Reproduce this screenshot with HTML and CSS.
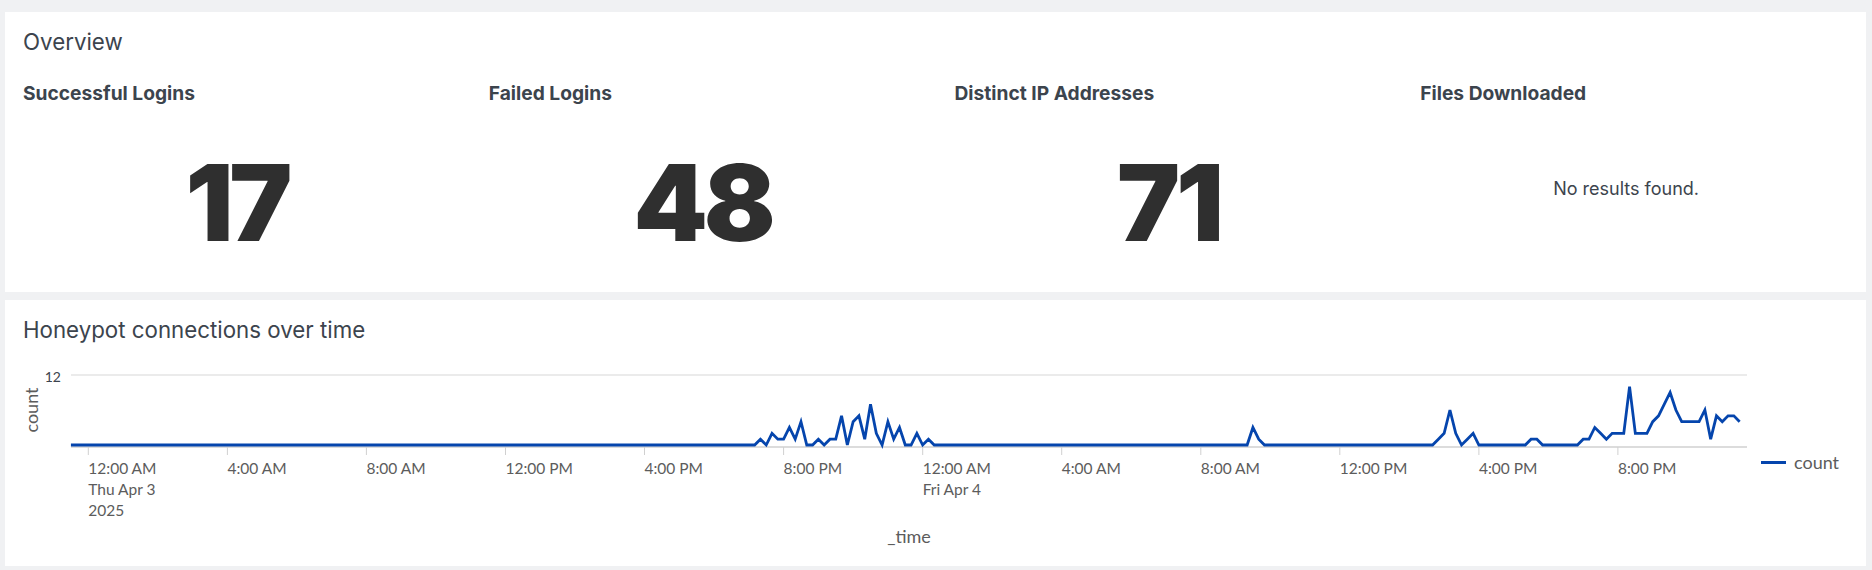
FILE: index.html
```html
<!DOCTYPE html>
<html lang="en">
<head>
<meta charset="utf-8">
<title>Honeypot Dashboard</title>
<link rel="stylesheet" href="styles.css">
</head>
<body>
<main class="dashboard">
  <section class="panel overview">
    <h2 class="panel-title">Overview</h2>
    <div class="stats">
      <div class="stat">
        <h3 class="stat-title">Successful Logins</h3>
        <div class="stat-value">17</div>
      </div>
      <div class="stat">
        <h3 class="stat-title">Failed Logins</h3>
        <div class="stat-value">48</div>
      </div>
      <div class="stat">
        <h3 class="stat-title">Distinct IP Addresses</h3>
        <div class="stat-value">71</div>
      </div>
      <div class="stat">
        <h3 class="stat-title">Files Downloaded</h3>
        <div class="stat-empty">No results found.</div>
      </div>
    </div>
  </section>

  <section class="panel timeline">
    <h2 class="panel-title">Honeypot connections over time</h2>
    <div class="chart-row">
      <svg class="chart" width="1730" height="200" viewBox="0 0 1730 200" xmlns="http://www.w3.org/2000/svg">
        <line class="grid" x1="48" y1="20" x2="1724" y2="20"/>
        <text class="y-tick" x="38" y="27">12</text>
        <text class="axis-title" transform="translate(15.3 55) rotate(-90)">count</text>
        <line class="axis" x1="48" y1="92" x2="1724" y2="92"/>
        <g class="ticks">
          <line x1="65.3" y1="92" x2="65.3" y2="100"/>
          <line x1="204.4" y1="92" x2="204.4" y2="100"/>
          <line x1="343.4" y1="92" x2="343.4" y2="100"/>
          <line x1="482.5" y1="92" x2="482.5" y2="100"/>
          <line x1="621.5" y1="92" x2="621.5" y2="100"/>
          <line x1="760.6" y1="92" x2="760.6" y2="100"/>
          <line x1="899.7" y1="92" x2="899.7" y2="100"/>
          <line x1="1038.7" y1="92" x2="1038.7" y2="100"/>
          <line x1="1177.8" y1="92" x2="1177.8" y2="100"/>
          <line x1="1316.8" y1="92" x2="1316.8" y2="100"/>
          <line x1="1455.9" y1="92" x2="1455.9" y2="100"/>
          <line x1="1594.9" y1="92" x2="1594.9" y2="100"/>
        </g>
        <g class="x-labels">
          <text x="65.3" y="119">12:00 AM</text>
          <text x="65.3" y="140">Thu Apr 3</text>
          <text x="65.3" y="161">2025</text>
          <text x="204.4" y="119">4:00 AM</text>
          <text x="343.4" y="119">8:00 AM</text>
          <text x="482.5" y="119">12:00 PM</text>
          <text x="621.5" y="119">4:00 PM</text>
          <text x="760.6" y="119">8:00 PM</text>
          <text x="899.7" y="119">12:00 AM</text>
          <text x="899.7" y="140">Fri Apr 4</text>
          <text x="1038.7" y="119">4:00 AM</text>
          <text x="1177.8" y="119">8:00 AM</text>
          <text x="1316.8" y="119">12:00 PM</text>
          <text x="1455.9" y="119">4:00 PM</text>
          <text x="1594.9" y="119">8:00 PM</text>
        </g>
        <text class="axis-title" x="886" y="188" text-anchor="middle">_time</text>
        <g transform="translate(65.3 90) scale(5.7942 -5.8333)">
          <polyline class="series" points="-3,0 115,0 116,1 117,0 118,2 119,1 120,1 121,3 122,1 123,4 124,0 125,0 126,1 127,0 128,1 129,1 130,5 131,0 132,4 133,5 134,1 135,7 136,2 137,0 138,4 139,1 140,3 141,0 142,0 143,2 144,0 145,1 146,0 200,0 201,3 202,1 203,0 232,0 233,1 234,2 235,6 236,2 237,0 238,1 239,2 240,0 248,0 249,1 250,1 251,0 257,0 258,1 259,1 260,3 261,2 262,1 263,2 264,2 265,2 266,10 267,2 268,2 269,2 270,4 271,5 272,7 273,9 274,6 275,4 276,4 277,4 278,4 279,6 280,1 281,5 282,4 283,5 284,5 285,4"/>
        </g>
      </svg>
      <div class="legend">
        <span class="legend-swatch"></span>
        <span class="legend-label">count</span>
      </div>
    </div>
  </section>
</main>
</body>
</html>
```

FILE: styles.css
```css
html, body {
  margin: 0;
  padding: 0;
}

body {
  background: #f0f1f3;
  font-family: "Inter", "Lato", "Liberation Sans", sans-serif;
  color: #3c444d;
}

.dashboard {
  display: flex;
  flex-direction: column;
  gap: 8px;
  padding: 12px 6px 4px 5px;
}

.panel {
  background: #ffffff;
  padding: 16px 18px 0 18px;
  box-sizing: border-box;
}

.overview {
  height: 280px;
}

.timeline {
  height: 266px;
}

.panel-title {
  margin: 0;
  font-size: 22.3px;
  line-height: 28px;
  font-weight: 400;
  color: #3c444d;
}

.stats {
  display: grid;
  grid-template-columns: repeat(4, 1fr);
  column-gap: 38px;
  margin-top: 25px;
}

.stat {
  display: flex;
  flex-direction: column;
}

.stat-title {
  margin: 0;
  font-size: 19.2px;
  line-height: 24px;
  font-weight: 700;
  color: #3c444d;
}

.stat-value {
  margin-top: 44px;
  text-align: center;
  font-family: "Inter", "Roboto", sans-serif;
  font-weight: 900;
  font-size: 106px;
  line-height: 108px;
  letter-spacing: -4px;
  color: #2f2f2f;
}

.stat-empty {
  margin-top: 72px;
  padding-right: 16px;
  text-align: center;
  font-size: 18px;
  line-height: 24px;
  color: #3c444d;
}

.chart-row {
  display: flex;
  align-items: flex-start;
  margin-top: 11px;
}

.chart {
  display: block;
  flex: none;
  overflow: visible;
}

.chart .grid {
  stroke: #e4e4e4;
  stroke-width: 1.5;
}

.chart .axis {
  stroke: #d0d0d0;
  stroke-width: 1.5;
}

.chart .ticks line {
  stroke: #d0d0d0;
  stroke-width: 1;
}

.chart text {
  font-family: "Lato", "Liberation Sans", sans-serif;
  fill: #5c5c5c;
}

.chart .y-tick {
  font-size: 14px;
  text-anchor: end;
  fill: #3c444d;
}

.chart .x-labels text {
  font-size: 15.5px;
}

.chart .axis-title {
  font-size: 18px;
  text-anchor: middle;
  fill: #5c5c5c;
}

.chart .series {
  fill: none;
  stroke: #0545ad;
  stroke-width: 2.8px;
  vector-effect: non-scaling-stroke;
  stroke-linejoin: miter;
}

.legend {
  display: flex;
  align-items: center;
  gap: 8px;
  margin-top: 96px;
  margin-left: 8px;
}

.legend-swatch {
  display: block;
  width: 25px;
  height: 3px;
  background: #0545ad;
}

.legend-label {
  font-family: "Lato", "Liberation Sans", sans-serif;
  font-size: 18px;
  line-height: 22px;
  color: #5c5c5c;
}
```
